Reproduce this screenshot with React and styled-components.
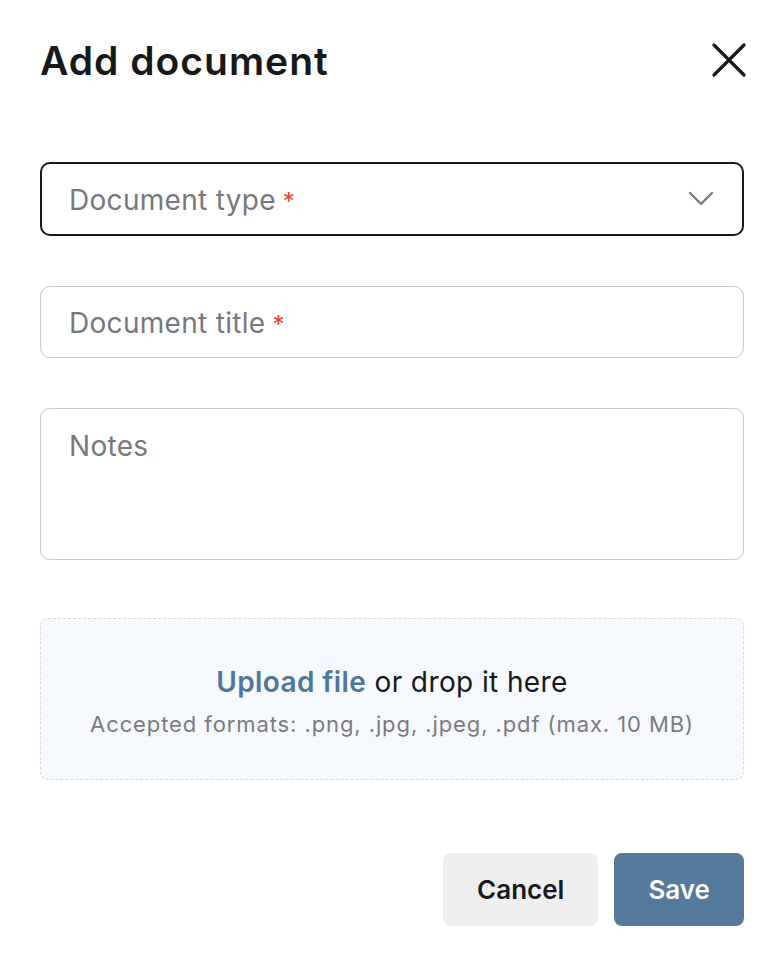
import React from "react";
import styled, { createGlobalStyle } from "styled-components";

const GlobalStyle = createGlobalStyle`
    body {
        margin: 0;
        background: #ffffff;
        font-family: "Inter", "Noto Sans", sans-serif;
        color: #17181a;
    }
`;

const App = () => {
    return (
        <>
            <GlobalStyle />
            <Dialog>
                <Header>
                    <Title>Add document</Title>
                    <CloseButton aria-label="Close">
                        <svg width={34} height={34} viewBox="0 0 34 34">
                            <path
                                d="M2 2 L32 32 M32 2 L2 32"
                                stroke="#17181a"
                                strokeWidth={3.2}
                                strokeLinecap="round"
                            />
                        </svg>
                    </CloseButton>
                </Header>

                <Form>
                    <SelectBox>
                        <Placeholder>
                            Document type<Required>*</Required>
                        </Placeholder>
                        <svg width={26} height={16} viewBox="0 0 26 16">
                            <path
                                d="M2 2 L13 13 L24 2"
                                fill="none"
                                stroke="#7a7b7e"
                                strokeWidth={2.4}
                                strokeLinecap="round"
                                strokeLinejoin="round"
                            />
                        </svg>
                    </SelectBox>

                    <Field height={72}>
                        <Placeholder>
                            Document title<Required>*</Required>
                        </Placeholder>
                    </Field>

                    <Field height={152} top>
                        <Placeholder>Notes</Placeholder>
                    </Field>

                    <DropZone>
                        <DropText>
                            <UploadLink>Upload file</UploadLink> or drop it here
                        </DropText>
                        <Formats>Accepted formats: .png, .jpg, .jpeg, .pdf (max. 10 MB)</Formats>
                    </DropZone>
                </Form>

                <Actions>
                    <Button>Cancel</Button>
                    <Button primary>Save</Button>
                </Actions>
            </Dialog>
        </>
    );
};

export default App;

const Dialog = styled.div`
    display: flex;
    flex-direction: column;
    padding: 35px 40px 40px 40px;
`;

const Header = styled.div`
    display: flex;
    align-items: center;
    justify-content: space-between;
    height: 50px;
`;

const Title = styled.h1`
    margin: 0;
    font-size: 39px;
    font-weight: 600;
    letter-spacing: 1px;
    color: #17181a;
`;

const CloseButton = styled.button`
    display: flex;
    align-items: center;
    justify-content: center;
    padding: 0;
    margin-right: -2px;
    border: none;
    background: none;
    cursor: pointer;
`;

const Form = styled.div`
    display: flex;
    flex-direction: column;
    margin-top: 77px;
`;

const Placeholder = styled.span`
    font-size: 28px;
    line-height: 34px;
    letter-spacing: 0.3px;
    color: #77787c;
`;

const Required = styled.span`
    margin-left: 7px;
    font-size: 24px;
    color: #e2442f;
`;

const SelectBox = styled.div`
    display: flex;
    align-items: center;
    justify-content: space-between;
    box-sizing: border-box;
    height: 74px;
    padding: 3px 28px 0 27px;
    border: 2px solid #17181a;
    border-radius: 10px;

    & > svg {
        margin-top: -3px;
    }
`;

const Field = styled.div`
    display: flex;
    align-items: ${(p) => (p.top ? "flex-start" : "center")};
    box-sizing: border-box;
    height: ${(p) => p.height}px;
    margin-top: 50px;
    padding: ${(p) => (p.top ? "20px 28px 0" : "3px 28px 0")};
    border: 1.5px solid #c6c7c9;
    border-radius: 10px;
`;

const DropZone = styled.div`
    display: flex;
    flex-direction: column;
    align-items: center;
    justify-content: center;
    gap: 11px;
    box-sizing: border-box;
    height: 162px;
    margin-top: 58px;
    padding-top: 4px;
    border: 1.5px dashed #d6d9dd;
    border-radius: 8px;
    background: #f5f9fd;
`;

const DropText = styled.div`
    font-size: 28px;
    line-height: 34px;
    letter-spacing: 0.4px;
    color: #17181a;
`;

const UploadLink = styled.span`
    font-weight: 600;
    color: #4f7598;
    cursor: pointer;
`;

const Formats = styled.div`
    font-size: 22px;
    line-height: 28px;
    letter-spacing: 0.9px;
    color: #7a7b7f;
`;

const Actions = styled.div`
    display: flex;
    justify-content: flex-end;
    gap: 16px;
    margin-top: 73px;
`;

const Button = styled.button`
    height: 73px;
    padding: 0 34px;
    border: none;
    border-radius: 8px;
    font-family: "Inter", "Noto Sans", sans-serif;
    font-size: 26px;
    font-weight: 600;
    color: ${(p) => (p.primary ? "#ffffff" : "#17181a")};
    background: ${(p) => (p.primary ? "#537a9b" : "#eeeeee")};
    cursor: pointer;
`;
